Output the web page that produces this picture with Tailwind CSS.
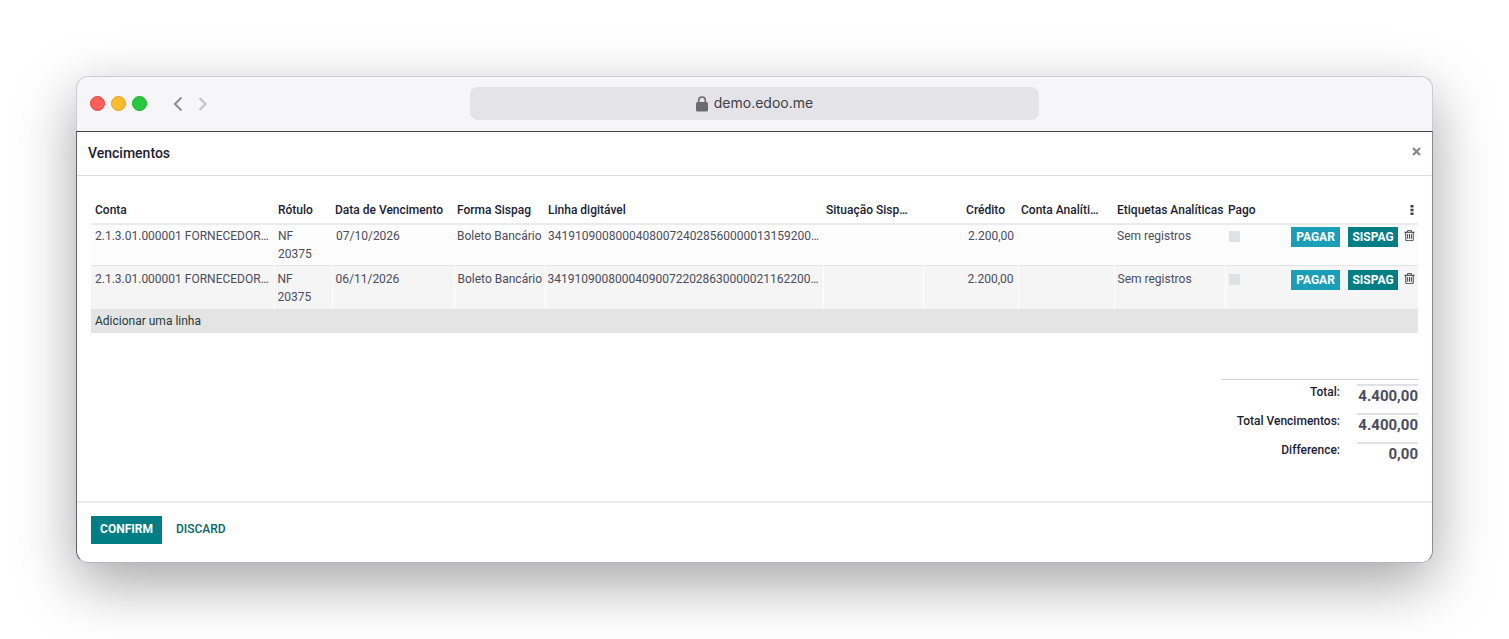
<!DOCTYPE html>
<html lang="pt-BR">
<head>
  <meta charset="UTF-8" />
  <meta name="viewport" content="width=device-width, initial-scale=1.0" />
  <title>Vencimentos</title>
  <script src="https://cdn.jsdelivr.net/npm/@tailwindcss/browser@4"></script>
</head>
<body class="bg-white p-[76px] font-['Roboto',sans-serif] text-xs leading-[18px] text-[#4c4c5c]">

  <!-- Ícones -->
  <svg class="hidden">
    <symbol id="lixeira" viewBox="0 0 1792 1792">
      <path d="M704 736v576q0 14-9 23t-23 9h-64q-14 0-23-9t-9-23v-576q0-14 9-23t23-9h64q14 0 23 9t9 23zm256 0v576q0 14-9 23t-23 9h-64q-14 0-23-9t-9-23v-576q0-14 9-23t23-9h64q14 0 23 9t9 23zm256 0v576q0 14-9 23t-23 9h-64q-14 0-23-9t-9-23v-576q0-14 9-23t23-9h64q14 0 23 9t9 23zm128 724v-948h-896v948q0 22 7 40.5t14.5 27 10.5 8.5h832q3 0 10.5-8.5t14.5-27 7-40.5zm-672-1076h448l-48-117q-7-9-17-11h-317q-10 2-17 11zm928 32v64q0 14-9 23t-23 9h-96v948q0 83-47 143.5t-113 60.5h-832q-66 0-113-58.5t-47-141.5v-952h-96q-14 0-23-9t-9-23v-64q0-14 9-23t23-9h309l70-167q15-37 54-63t79-26h320q40 0 79 26t54 63l70 167h309q14 0 23 9t9 23z" />
    </symbol>
  </svg>

  <div class="rounded-xl shadow-[0_20px_60px_rgba(0,0,0,0.36)]">

    <!-- Barra do navegador -->
    <header class="grid grid-cols-[1fr_42%_1fr] items-center rounded-t-xl border border-b-0 border-[#cbcbd0] bg-[#f6f6f9] px-px pt-[10px] pb-[11px]">
      <div class="flex items-center pl-3">
        <div class="flex gap-[6px]">
          <span class="size-[15px] rounded-full border border-[#e0443e] bg-[#ff5f57]"></span>
          <span class="size-[15px] rounded-full border border-[#dea123] bg-[#febc2e]"></span>
          <span class="size-[15px] rounded-full border border-[#1aab29] bg-[#28c840]"></span>
        </div>
        <button aria-label="Voltar" class="ml-[26px]">
          <svg class="h-4 w-[10px]" viewBox="0 0 10 16" fill="none" stroke="#8c8c91" stroke-width="2"><path d="M8.500 1.500 2 8l6.500 6.500" /></svg>
        </button>
        <button aria-label="Avançar" class="ml-[15px]">
          <svg class="h-4 w-[10px]" viewBox="0 0 10 16" fill="none" stroke="#c0c0c4" stroke-width="2"><path d="M1.500 2 7.500 8l-6 6" /></svg>
        </button>
      </div>
      <div class="flex h-[33px] items-center justify-center gap-[6px] rounded-lg bg-[#e4e3e8]">
        <svg class="h-4 w-3" viewBox="0 0 12 16"><rect y="6" width="12" height="9.500" rx="1.500" fill="#6c6b73" /><path d="M2.700 7V4.300a3.300 3.300 0 0 1 6.600 0V7" fill="none" stroke="#6c6b73" stroke-width="1.600" /></svg>
        <input type="text" aria-label="Endereço" value="demo.edoo.me" class="field-sizing-content pb-px font-['Inter',sans-serif] text-sm leading-5 text-[#3f3e45]">
      </div>
    </header>

    <main class="rounded-b-xl border border-t-[#45434a] border-r-[#8a898f] border-b-[#b4b4ba] border-l-[#5f5d68] bg-white">

      <!-- Título -->
      <div class="flex items-center justify-between border-b border-[#d9dbdf] pt-[11px] pr-[11px] pb-3 pl-[11px]">
        <h1 class="text-sm leading-5 font-medium text-[#1c1c33]">Vencimentos</h1>
        <button aria-label="Fechar" class="pb-1">
          <svg class="size-[9px]" viewBox="0 0 9 9" stroke="#88888c" stroke-width="2.200"><path d="M1 1l7 7M8 1 1 8" /></svg>
        </button>
      </div>

      <div class="px-[14px] pt-[25px]">
        <!-- Tabela de vencimentos -->
        <table class="w-full table-fixed">
          <colgroup>
            <col class="w-[183px]">
            <col class="w-[58px]">
            <col class="w-[122px]">
            <col class="w-[91px]">
            <col>
            <col class="w-[100px]">
            <col class="w-[95px]">
            <col class="w-[96px]">
            <col class="w-[111px]">
            <col class="w-[62px]">
            <col class="w-[115px]">
            <col class="w-4">
          </colgroup>
          <thead>
            <tr class="text-left whitespace-nowrap text-[#1c1c33] *:pb-1 *:font-medium">
              <th class="pl-1">Conta</th>
              <th class="pl-1">Rótulo</th>
              <th class="pl-[3px]">Data de Vencimento</th>
              <th class="pl-[3px]">Forma Sispag</th>
              <th class="pl-[3px]">Linha digitável</th>
              <th class="truncate pr-3 pl-[3px]">Situação Sispag</th>
              <th class="pr-[13px] text-right">Crédito</th>
              <th class="truncate pr-3 pl-[3px]">Conta Analítica</th>
              <th class="pl-[3px]">Etiquetas Analíticas</th>
              <th class="pl-[3px]">Pago</th>
              <th></th>
              <th>
                <button aria-label="Colunas opcionais" class="block px-2">
                  <svg class="h-[10px] w-1" viewBox="0 0 4 10" fill="#3d3d4d"><path d="M.5 0h3v2.500h-3zM.5 3.700h3v2.500h-3zM.5 7.400h3v2.500h-3z" /></svg>
                </button>
              </th>
            </tr>
          </thead>
          <tbody>
            <tr class="border-t-2 border-[#ebebed] bg-[#fcfcfc] align-top *:pt-[2px] *:pb-[2px]">
              <td class="truncate pr-1 pl-1">2.1.3.01.000001 FORNECEDORES</td>
              <td class="pr-4 pl-1">NF 20375</td>
              <td class="pl-1">07/10/2026</td>
              <td class="pl-[3px] whitespace-nowrap">Boleto Bancário</td>
              <td class="truncate pl-[3px]">34191090080004080072402856000001315920000</td>
              <td></td>
              <td class="pr-1 text-right">2.200,00</td>
              <td></td>
              <td class="pl-[3px]">Sem registros</td>
              <td class="pl-1"><input type="checkbox" aria-label="Pago" disabled class="mt-1 block size-[11px] appearance-none bg-[#e0e1e5]"></td>
              <td>
                <div class="flex justify-end gap-2 pr-1 text-white">
                  <button class="h-5 w-[49px] bg-[#1a9fb6] font-bold">PAGAR</button>
                  <button class="h-5 w-[50px] bg-[#017e84] font-bold">SISPAG</button>
                </div>
              </td>
              <td><button aria-label="Excluir" class="block py-[2px] pl-px"><svg class="size-[13px] fill-[#3a3a3f]"><use href="#lixeira" /></svg></button></td>
            </tr>
            <tr class="border-t border-[#e3e3e5] bg-[#f5f5f5] align-top *:border-l *:border-l-white *:pt-1 *:pb-[3px] *:first:border-l-0 *:nth-[n+11]:border-l-0">
              <td class="truncate pr-1 pl-1">2.1.3.01.000001 FORNECEDORES</td>
              <td class="pr-4 pl-[3px]">NF 20375</td>
              <td class="pl-[3px]">06/11/2026</td>
              <td class="pl-[3px] whitespace-nowrap">Boleto Bancário</td>
              <td class="truncate pl-[2px]">34191090080004090072202863000002116220000</td>
              <td></td>
              <td class="pr-1 text-right">2.200,00</td>
              <td></td>
              <td class="pl-[3px]">Sem registros</td>
              <td class="pl-[3px]"><input type="checkbox" aria-label="Pago" disabled class="mt-1 block size-[11px] appearance-none bg-[#e0e1e5]"></td>
              <td>
                <div class="flex justify-end gap-2 pr-1 text-white">
                  <button class="h-5 w-[49px] bg-[#1a9fb6] font-bold">PAGAR</button>
                  <button class="h-5 w-[50px] bg-[#017e84] font-bold">SISPAG</button>
                </div>
              </td>
              <td><button aria-label="Excluir" class="block py-[2px] pl-px"><svg class="size-[13px] fill-[#3a3a3f]"><use href="#lixeira" /></svg></button></td>
            </tr>
            <tr class="bg-[#e4e4e4]">
              <td colspan="12" class="py-[3px] pl-1"><a href="#" class="text-[#1f3a38]">Adicionar uma linha</a></td>
            </tr>
          </tbody>
        </table>

        <!-- Totais -->
        <dl class="mt-[46px] ml-auto grid w-[196px] grid-cols-[1fr_61px] gap-x-[17px] gap-y-[5px] border-t border-[#cfd2d6] pt-1 text-right">
          <dt class="leading-4 font-medium text-[#1c1c33]">Total:</dt>
          <dd class="border-t-2 border-[#e0e1e4] pb-[2px] text-[15px] leading-5 font-bold">4.400,00</dd>
          <dt class="leading-4 font-medium text-[#1c1c33]">Total Vencimentos:</dt>
          <dd class="border-t-2 border-[#e0e1e4] pb-[2px] text-[15px] leading-5 font-bold">4.400,00</dd>
          <dt class="leading-4 font-medium text-[#1c1c33]">Difference:</dt>
          <dd class="border-t-2 border-[#e0e1e4] pb-[2px] text-[15px] leading-5 font-bold">0,00</dd>
        </dl>
      </div>

      <!-- Rodapé -->
      <footer class="mt-[35px] flex items-center gap-[14px] border-t-2 border-[#ebeced] px-[14px] pt-[13px] pb-[18px]">
        <button class="h-7 w-[71px] bg-[#017e84] pb-[2px] font-bold text-white">CONFIRM</button>
        <button class="pb-[2px] font-medium text-[#01666b]">DISCARD</button>
      </footer>
    </main>
  </div>

</body>
</html>
